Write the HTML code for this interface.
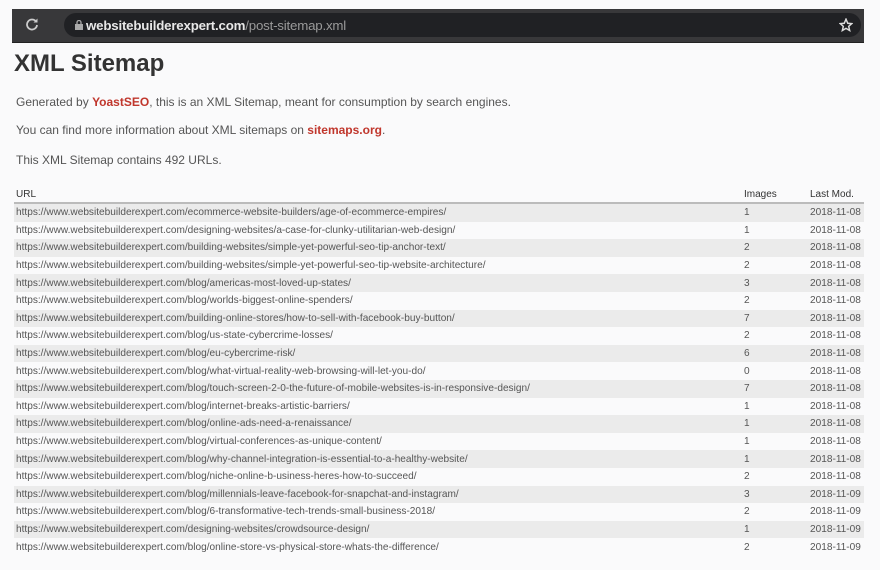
<!DOCTYPE html>
<html><head><style>
body{margin:0;width:880px;height:570px;background:#fafafb;font-family:"Liberation Sans",Arial,sans-serif;position:relative;overflow:hidden;color:#444}
.bar{position:absolute;left:12px;top:9px;width:852px;height:33px;background:#38383a;border-bottom:1px solid #222}
.pill{position:absolute;left:52px;top:4px;width:797px;height:24px;background:#202124;border-radius:12px}
.url{position:absolute;top:5px;font-size:13.3px;color:#e8e8e8;font-weight:bold;letter-spacing:-0.2px}
.url span{color:#9a9a9a;font-weight:normal}
h1{position:absolute;left:14px;top:50px;margin:0;font-size:24px;font-weight:bold;color:#333}
.p{position:absolute;left:16px;font-size:12px;color:#555}
.p b{color:#c0362c}
table{position:absolute;left:14px;top:186px;width:850px;border-collapse:collapse;font-size:10.1px;color:#555}
th{text-align:left;font-weight:normal;font-size:10px;color:#333;height:16px;border-bottom:2px solid #bbb;padding:0 2px}
td{height:17.6px;padding:0 2px;white-space:nowrap}
tr:nth-child(even) td{background:#ebebeb}
td:nth-child(2),th:nth-child(2){width:62px;padding-left:0}
td:nth-child(3),th:nth-child(3){width:52px}
</style></head><body>
<div class="bar"><svg style="position:absolute;left:13px;top:8px" width="14" height="14" viewBox="0 0 14 14"><path d="M11 4.5A5 5 0 1 0 12 8" fill="none" stroke="#ccc" stroke-width="1.8"/><path d="M12.5 1.5v4h-4z" fill="#ccc"/></svg>
<div class="pill"><svg style="position:absolute;left:11px;top:7px" width="8" height="10" viewBox="0 0 8 10"><rect x="0" y="4" width="8" height="6" fill="#aaa"/><path d="M2 4V2.5a2 2 0 0 1 4 0V4" fill="none" stroke="#aaa" stroke-width="1.3"/></svg>
<div class="url" style="left:22px">websitebuilderexpert.com<span>/post-sitemap.xml</span></div>
<svg style="position:absolute;left:775px;top:5px" width="14" height="14" viewBox="0 0 24 24"><path d="M12 2l3 7 7 .6-5.4 4.7 1.7 7.2L12 17.8 5.7 21.5l1.7-7.2L2 9.6 9 9z" fill="none" stroke="#ddd" stroke-width="2.5"/></svg></div></div>
<h1>XML Sitemap</h1>
<div class="p" style="top:95px">Generated by <b>YoastSEO</b>, this is an XML Sitemap, meant for consumption by search engines.</div>
<div class="p" style="top:123px">You can find more information about XML sitemaps on <b>sitemaps.org</b>.</div>
<div class="p" style="top:153px">This XML Sitemap contains 492 URLs.</div>
<table>
<tr><th>URL</th><th>Images</th><th>Last Mod.</th></tr>
<tr><td>https://www.websitebuilderexpert.com/ecommerce-website-builders/age-of-ecommerce-empires/</td><td>1</td><td>2018-11-08</td></tr>
<tr><td>https://www.websitebuilderexpert.com/designing-websites/a-case-for-clunky-utilitarian-web-design/</td><td>1</td><td>2018-11-08</td></tr>
<tr><td>https://www.websitebuilderexpert.com/building-websites/simple-yet-powerful-seo-tip-anchor-text/</td><td>2</td><td>2018-11-08</td></tr>
<tr><td>https://www.websitebuilderexpert.com/building-websites/simple-yet-powerful-seo-tip-website-architecture/</td><td>2</td><td>2018-11-08</td></tr>
<tr><td>https://www.websitebuilderexpert.com/blog/americas-most-loved-up-states/</td><td>3</td><td>2018-11-08</td></tr>
<tr><td>https://www.websitebuilderexpert.com/blog/worlds-biggest-online-spenders/</td><td>2</td><td>2018-11-08</td></tr>
<tr><td>https://www.websitebuilderexpert.com/building-online-stores/how-to-sell-with-facebook-buy-button/</td><td>7</td><td>2018-11-08</td></tr>
<tr><td>https://www.websitebuilderexpert.com/blog/us-state-cybercrime-losses/</td><td>2</td><td>2018-11-08</td></tr>
<tr><td>https://www.websitebuilderexpert.com/blog/eu-cybercrime-risk/</td><td>6</td><td>2018-11-08</td></tr>
<tr><td>https://www.websitebuilderexpert.com/blog/what-virtual-reality-web-browsing-will-let-you-do/</td><td>0</td><td>2018-11-08</td></tr>
<tr><td>https://www.websitebuilderexpert.com/blog/touch-screen-2-0-the-future-of-mobile-websites-is-in-responsive-design/</td><td>7</td><td>2018-11-08</td></tr>
<tr><td>https://www.websitebuilderexpert.com/blog/internet-breaks-artistic-barriers/</td><td>1</td><td>2018-11-08</td></tr>
<tr><td>https://www.websitebuilderexpert.com/blog/online-ads-need-a-renaissance/</td><td>1</td><td>2018-11-08</td></tr>
<tr><td>https://www.websitebuilderexpert.com/blog/virtual-conferences-as-unique-content/</td><td>1</td><td>2018-11-08</td></tr>
<tr><td>https://www.websitebuilderexpert.com/blog/why-channel-integration-is-essential-to-a-healthy-website/</td><td>1</td><td>2018-11-08</td></tr>
<tr><td>https://www.websitebuilderexpert.com/blog/niche-online-b-usiness-heres-how-to-succeed/</td><td>2</td><td>2018-11-08</td></tr>
<tr><td>https://www.websitebuilderexpert.com/blog/millennials-leave-facebook-for-snapchat-and-instagram/</td><td>3</td><td>2018-11-09</td></tr>
<tr><td>https://www.websitebuilderexpert.com/blog/6-transformative-tech-trends-small-business-2018/</td><td>2</td><td>2018-11-09</td></tr>
<tr><td>https://www.websitebuilderexpert.com/designing-websites/crowdsource-design/</td><td>1</td><td>2018-11-09</td></tr>
<tr><td>https://www.websitebuilderexpert.com/blog/online-store-vs-physical-store-whats-the-difference/</td><td>2</td><td>2018-11-09</td></tr>
</table>
</body></html>
